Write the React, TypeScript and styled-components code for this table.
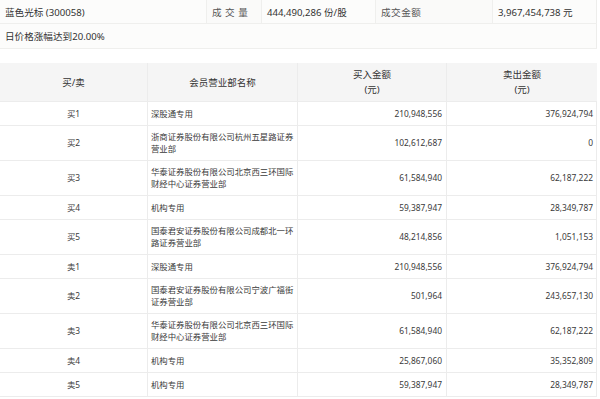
import { Fragment } from 'react';
import styled, { createGlobalStyle } from 'styled-components';

const GlobalStyle = createGlobalStyle`
  html, body {
    margin: 0;
    padding: 0;
    background: #ffffff;
  }
  body {
    font-family: 'Noto Sans', 'Noto Sans CJK SC', sans-serif;
    color: #333;
  }
`;

const Page = styled.div`
  width: 597px;
  display: flex;
  flex-direction: column;
  gap: 14px;
`;

const InfoTable = styled.div`
  display: grid;
  grid-template-columns: 207px 55px 114px 117px 104px;
  grid-template-rows: 24px 25px;
  background: #fcfcfb;
  border-right: 1px solid #ededeb;
  font-size: 9.6px;
`;

const InfoCell = styled.div<{ $label?: boolean; $span?: boolean }>`
  display: flex;
  align-items: center;
  padding: 0 5px;
  border-bottom: 1px solid #efefed;
  border-right: ${(p) => (p.$span ? 'none' : '1px solid #efefed')};
  grid-column: ${(p) => (p.$span ? '1 / -1' : 'auto')};
  background: ${(p) => (p.$label ? '#fafaf9' : 'transparent')};
  color: ${(p) => (p.$label ? '#555' : '#333')};
  letter-spacing: ${(p) => (p.$label ? '0.5px' : '0')};
  &:nth-child(5) {
    border-right: none;
  }
`;

const DealTable = styled.div`
  display: grid;
  grid-template-columns: 148px 150px 149px 150px;
  font-size: 8.4px;
  line-height: 12px;
  border-right: 1px solid #ececec;
`;

const HeadCell = styled.div`
  height: 38px;
  display: flex;
  flex-direction: column;
  align-items: center;
  justify-content: center;
  font-size: 9.5px;
  line-height: 15px;
  background: #f5f5f5;
  border-bottom: 1px solid #ececec;
  border-right: 1px solid #ececec;
  color: #333;
  text-align: center;
  &:nth-child(4) {
    border-right: none;
  }
`;

const Cell = styled.div<{ $tall?: boolean; $align: 'left' | 'center' | 'right'; $last?: boolean }>`
  height: ${(p) => (p.$tall ? '34px' : '23px')};
  display: flex;
  align-items: center;
  justify-content: ${(p) =>
    p.$align === 'left' ? 'flex-start' : p.$align === 'center' ? 'center' : 'flex-end'};
  padding: ${(p) => (p.$align === 'left' ? '0 2px 0 3px' : '0 4px')};
  border-bottom: 1px solid #ececec;
  border-right: ${(p) => (p.$last ? 'none' : '1px solid #ececec')};
  color: #3a3a3a;
  text-align: ${(p) => p.$align};
`;

const Wrap = styled.span`
  display: block;
  width: 100%;
`;

interface Row {
  side: string;
  name: string;
  buy: string;
  sell: string;
  tall?: boolean;
}

const rows: Row[] = [
  { side: '买1', name: '深股通专用', buy: '210,948,556', sell: '376,924,794' },
  { side: '买2', name: '浙商证券股份有限公司杭州五星路证券营业部', buy: '102,612,687', sell: '0', tall: true },
  { side: '买3', name: '华泰证券股份有限公司北京西三环国际财经中心证券营业部', buy: '61,584,940', sell: '62,187,222', tall: true },
  { side: '买4', name: '机构专用', buy: '59,387,947', sell: '28,349,787' },
  { side: '买5', name: '国泰君安证券股份有限公司成都北一环路证券营业部', buy: '48,214,856', sell: '1,051,153', tall: true },
  { side: '卖1', name: '深股通专用', buy: '210,948,556', sell: '376,924,794' },
  { side: '卖2', name: '国泰君安证券股份有限公司宁波广福街证券营业部', buy: '501,964', sell: '243,657,130', tall: true },
  { side: '卖3', name: '华泰证券股份有限公司北京西三环国际财经中心证券营业部', buy: '61,584,940', sell: '62,187,222', tall: true },
  { side: '卖4', name: '机构专用', buy: '25,867,060', sell: '35,352,809' },
  { side: '卖5', name: '机构专用', buy: '59,387,947', sell: '28,349,787' },
];

export default function App() {
  return (
    <>
      <GlobalStyle />
      <Page>
        <InfoTable>
          <InfoCell>蓝色光标 (300058)</InfoCell>
          <InfoCell $label>成 交 量</InfoCell>
          <InfoCell>444,490,286 份/股</InfoCell>
          <InfoCell $label>成交金额</InfoCell>
          <InfoCell>3,967,454,738 元</InfoCell>
          <InfoCell $span>日价格涨幅达到20.00%</InfoCell>
        </InfoTable>
        <DealTable>
          <HeadCell>买/卖</HeadCell>
          <HeadCell>会员营业部名称</HeadCell>
          <HeadCell>
            <span>买入金额</span>
            <span>(元)</span>
          </HeadCell>
          <HeadCell>
            <span>卖出金额</span>
            <span>(元)</span>
          </HeadCell>
          {rows.map((r) => (
            <Fragment key={r.side}>
              <Cell $tall={r.tall} $align="center">{r.side}</Cell>
              <Cell $tall={r.tall} $align="left">
                <Wrap>{r.name}</Wrap>
              </Cell>
              <Cell $tall={r.tall} $align="right">{r.buy}</Cell>
              <Cell $tall={r.tall} $align="right" $last>{r.sell}</Cell>
            </Fragment>
          ))}
        </DealTable>
      </Page>
    </>
  );
}
